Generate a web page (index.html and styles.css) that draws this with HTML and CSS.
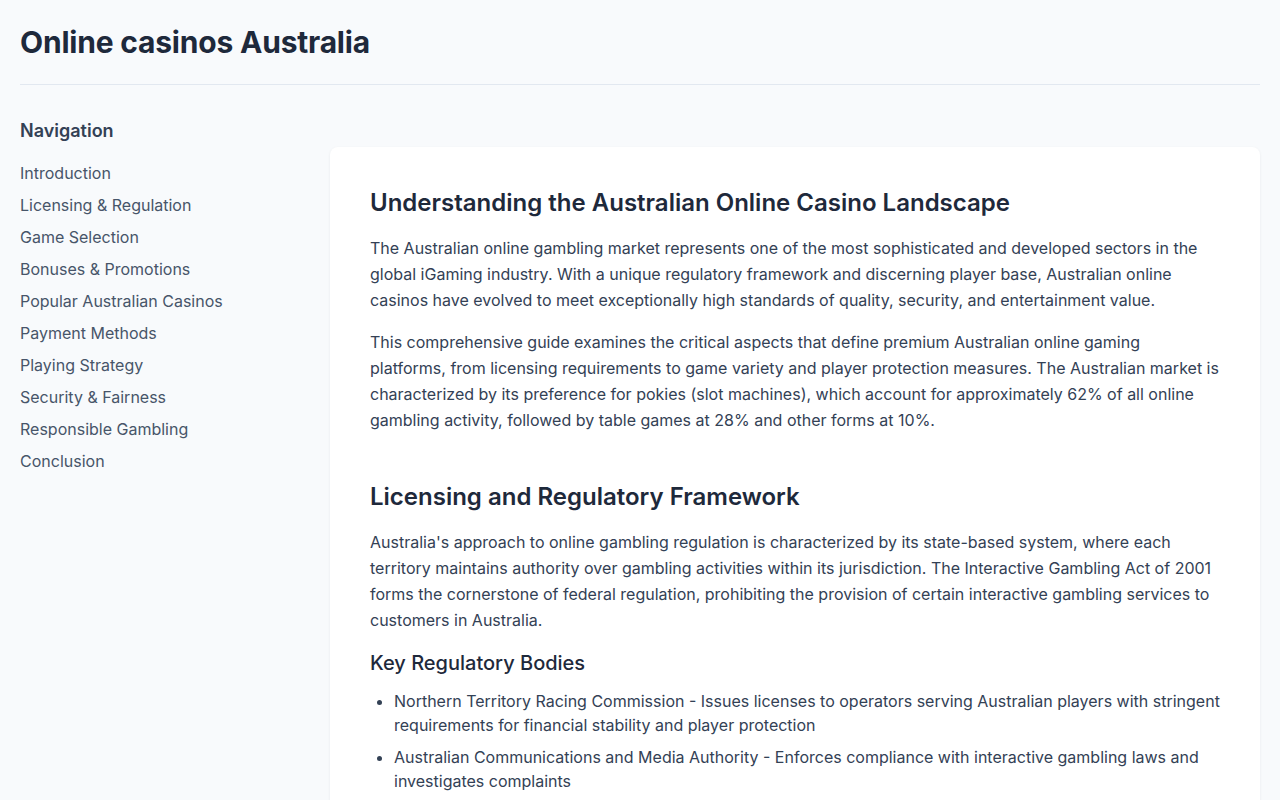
FILE: index.html
```html
<!DOCTYPE html>
<html lang="en">
<head>
	<meta charset="UTF-8">
	<title>Online casinos Australia</title>
	<link rel="stylesheet" href="styles.css">
</head>
<body>
	<header class="top">
		<h1>Online casinos Australia</h1>
	</header>

	<div class="layout">
		<nav class="sidebar">
			<h3>Navigation</h3>
			<ul>
				<li><a href="#intro">Introduction</a></li>
				<li><a href="#licensing">Licensing &amp; Regulation</a></li>
				<li><a href="#games">Game Selection</a></li>
				<li><a href="#bonuses">Bonuses &amp; Promotions</a></li>
				<li><a href="#casinos">Popular Australian Casinos</a></li>
				<li><a href="#payments">Payment Methods</a></li>
				<li><a href="#strategy">Playing Strategy</a></li>
				<li><a href="#security">Security &amp; Fairness</a></li>
				<li><a href="#responsible">Responsible Gambling</a></li>
				<li><a href="#conclusion">Conclusion</a></li>
			</ul>
		</nav>

		<main class="card">
			<section id="intro">
				<h2>Understanding the Australian Online Casino Landscape</h2>
				<p>The Australian online gambling market represents one of the most sophisticated and developed sectors in the global iGaming industry. With a unique regulatory framework and discerning player base, Australian online casinos have evolved to meet exceptionally high standards of quality, security, and entertainment value.</p>
				<p>This comprehensive guide examines the critical aspects that define premium Australian online gaming platforms, from licensing requirements to game variety and player protection measures. The Australian market is characterized by its preference for pokies (slot machines), which account for approximately 62% of all online gambling activity, followed by table games at 28% and other forms at 10%.</p>
			</section>

			<section id="licensing">
				<h2>Licensing and Regulatory Framework</h2>
				<p>Australia's approach to online gambling regulation is characterized by its state-based system, where each territory maintains authority over gambling activities within its jurisdiction. The Interactive Gambling Act of 2001 forms the cornerstone of federal regulation, prohibiting the provision of certain interactive gambling services to customers in Australia.</p>
				<h3>Key Regulatory Bodies</h3>
				<ul>
					<li>Northern Territory Racing Commission - Issues licenses to operators serving Australian players with stringent requirements for financial stability and player protection</li>
					<li>Australian Communications and Media Authority - Enforces compliance with interactive gambling laws and investigates complaints</li>
					<li>Victorian Gambling and Casino Control Commission - Oversees land-based and online operators licensed in Victoria</li>
				</ul>
			</section>
		</main>
	</div>
</body>
</html>
```

FILE: styles.css
```css
* {
	margin: 0;
	padding: 0;
	box-sizing: border-box;
}

body {
	background: #f8fafc;
	color: #334155;
	font-family: Inter, "Liberation Sans", sans-serif;
	font-size: 16px;
	padding: 0 20px;
}

ul {
	list-style: none;
}

a {
	color: inherit;
	text-decoration: none;
}

/* page title */
.top {
	padding: 22px 0 22px;
	border-bottom: 1px solid #e2e8f0;
}

.top h1 {
	font-size: 30px;
	font-weight: 700;
	line-height: 40px;
	letter-spacing: -0.2px;
	color: #1e293b;
}

.layout {
	display: grid;
	grid-template-columns: 280px 1fr;
	gap: 30px;
	padding-top: 32px;
}

/* left column */
.sidebar h3 {
	font-size: 18px;
	font-weight: 600;
	line-height: 28px;
	color: #334155;
	margin-bottom: 12px;
}

.sidebar li a {
	display: block;
	line-height: 24px;
	padding: 4px 0;
	color: #475569;
}

/* article */
.card {
	background: #fff;
	border-radius: 8px;
	box-shadow: 0 1px 3px rgba(15, 23, 42, 0.07);
	padding: 40px;
	margin-top: 30px;
}

.card section {
	margin-bottom: 48px;
}

.card h2 {
	font-size: 24px;
	font-weight: 600;
	line-height: 32px;
	color: #1e293b;
	margin-bottom: 16px;
}

.card p {
	line-height: 26px;
	margin-bottom: 16px;
}

.card section > p:last-child {
	margin-bottom: 0;
}

.card h3 {
	font-size: 20px;
	font-weight: 500;
	line-height: 28px;
	color: #1e293b;
	margin-bottom: 12px;
}

.card section ul {
	list-style: disc;
	padding-left: 24px;
}

.card section ul li {
	line-height: 24px;
	margin-bottom: 8px;
}
```
